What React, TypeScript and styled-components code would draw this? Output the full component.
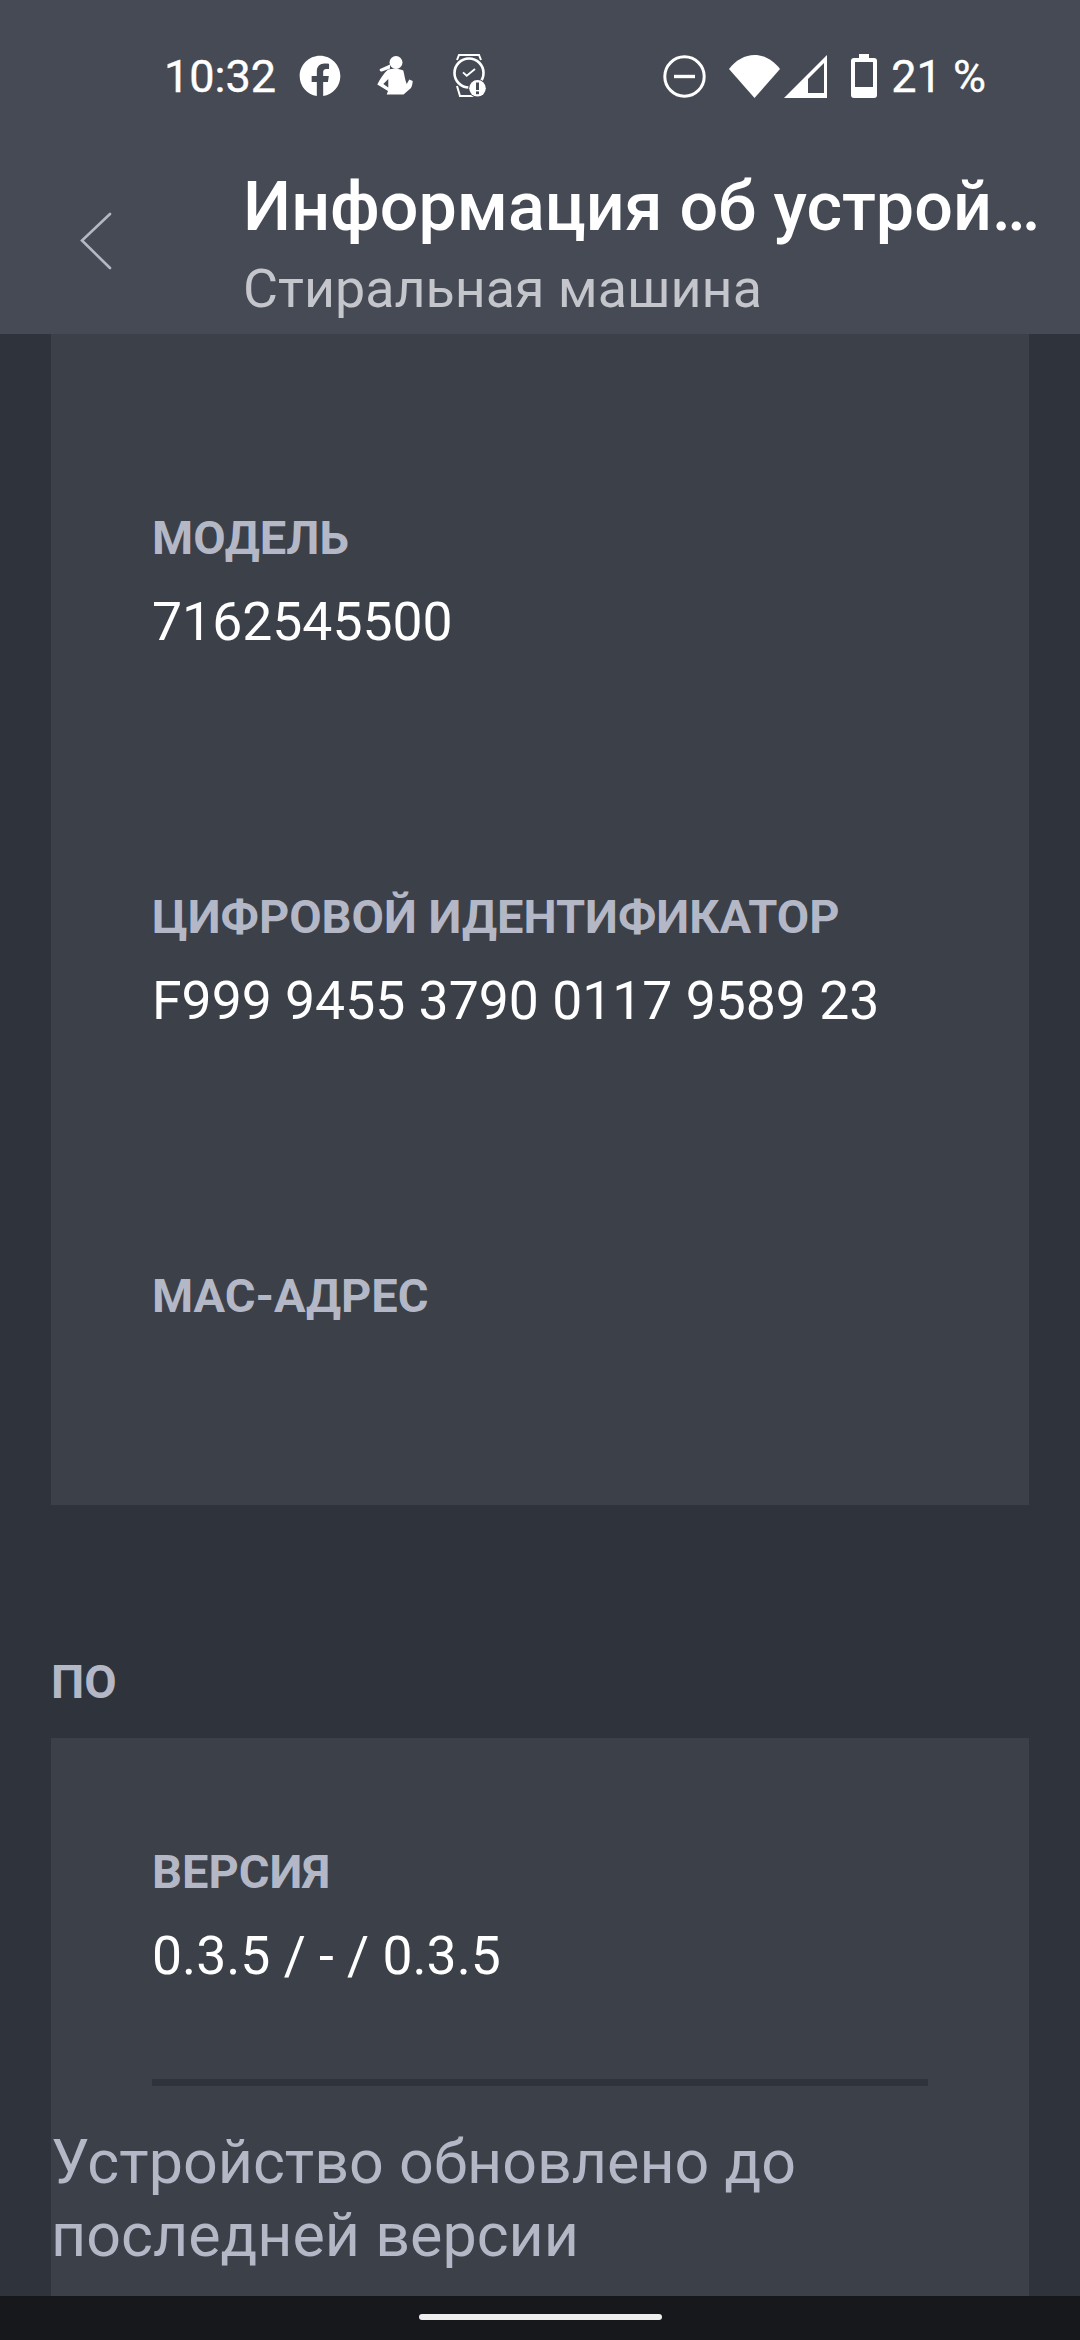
import styled, { createGlobalStyle } from "styled-components";
import { FaFacebook } from "react-icons/fa";

const GlobalStyle = createGlobalStyle`
  html, body {
    margin: 0;
    padding: 0;
    background: #2f333b;
  }
  * {
    box-sizing: border-box;
  }
`;

type Field = {
  label: string;
  value?: string;
};

const deviceFields: Field[] = [
  { label: "МОДЕЛЬ", value: "7162545500" },
  { label: "ЦИФРОВОЙ ИДЕНТИФИКАТОР", value: "F999 9455 3790 0117 9589 23" },
  { label: "MAC-АДРЕС" },
];

const RunnerIcon = () => (
  <svg width="36" height="41" viewBox="0 0 36 41" fill="#fff">
    <circle cx="19" cy="6.5" r="6.5" />
    <path d="M13 8.5 L3 13 C2 14 3 16 5 15.5 L13 12.5 Z" />
    <path
      fillRule="evenodd"
      d="M11 13.5 C16 12.5 22 12.5 26.3 14.5 C27.5 19 28 24 29.7 28 L32.3 23.5 L35.7 25 C35.5 28 35 30 34 32 L26.5 38.5 H9.7 L11 35 L0.3 28.5 C3 23 7 17 11 13.5 Z M6.3 28 L11.3 31.5 L11.3 23 Z"
    />
  </svg>
);

const WatchIcon = () => (
  <svg width="36" height="44" viewBox="0 0 36 44" fill="none" stroke="#fff">
    <path d="M5 6 L7 1 H27 L29 6" strokeWidth="2" />
    <path d="M5 32 L8 42 H22" strokeWidth="2" />
    <circle cx="17" cy="19" r="14.5" strokeWidth="2.6" />
    <path d="M11 18.3 L14.7 21.7 L23 15" strokeWidth="1.8" />
    <circle cx="25.5" cy="34.3" r="8.3" fill="#fff" stroke="#464a55" strokeWidth="2" paintOrder="stroke" />
    <rect x="24" y="28.5" width="3" height="7.5" fill="#464a55" stroke="none" />
    <rect x="24" y="37.4" width="3" height="2.8" fill="#464a55" stroke="none" />
  </svg>
);

const DndIcon = () => (
  <svg width="43" height="43" viewBox="0 0 43 43" fill="none" stroke="#fff">
    <circle cx="21.5" cy="21.5" r="19.7" strokeWidth="3" />
    <path d="M11 21.5 H32" strokeWidth="3.4" />
  </svg>
);

const WifiIcon = () => (
  <svg width="51" height="43" viewBox="0 0 51 43" fill="#fff">
    <path d="M25.5 43 L0 14 C7 5 16 0 25.5 0 C35 0 44 5 51 14 Z" />
  </svg>
);

const SignalIcon = () => (
  <svg width="43" height="43" viewBox="0 0 43 43" fill="#fff">
    <path fillRule="evenodd" d="M43 0 V43 H0 Z M40 8 L24 24 V38 H40 Z" />
  </svg>
);

const BatteryIcon = () => (
  <svg width="26" height="44" viewBox="0 0 26 44" fill="#fff">
    <path
      fillRule="evenodd"
      d="M8 0 H18 V4 H23 C25 4 26 5 26 7 V41 C26 43 25 44 23 44 H3 C1 44 0 43 0 41 V7 C0 5 1 4 3 4 H8 Z M4 8 V33 H22 V8 Z"
    />
  </svg>
);

const BackIcon = () => (
  <svg width="32" height="58" viewBox="0 0 32 58" fill="none" stroke="#b4b8c6" strokeWidth="2.6" strokeLinecap="round">
    <path d="M30 2 L2 28.5 L30 56" />
  </svg>
);

export default function App() {
  return (
    <>
      <GlobalStyle />
      <Screen>
        <Header>
          <StatusBar>
            <StatusGroup>
              <Clock>10:32</Clock>
              <StatusIcon $left={23}>
                <FaFacebook size={42} color="#fff" />
              </StatusIcon>
              <StatusIcon $left={36}>
                <RunnerIcon />
              </StatusIcon>
              <StatusIcon $left={39}>
                <WatchIcon />
              </StatusIcon>
            </StatusGroup>
            <StatusGroup>
              <StatusIcon $left={0}>
                <DndIcon />
              </StatusIcon>
              <StatusIcon $left={23}>
                <WifiIcon />
              </StatusIcon>
              <StatusIcon $left={4}>
                <SignalIcon />
              </StatusIcon>
              <StatusIcon $left={24}>
                <BatteryIcon />
              </StatusIcon>
              <BatteryText>21 %</BatteryText>
            </StatusGroup>
          </StatusBar>
          <TitleBar>
            <BackButton>
              <BackIcon />
            </BackButton>
            <TitleBlock>
              <Title>Информация об устройстве</Title>
              <Subtitle>Стиральная машина</Subtitle>
            </TitleBlock>
          </TitleBar>
        </Header>

        <Content>
          <Card $first>
            {deviceFields.map((field) => (
              <FieldRow key={field.label}>
                <FieldLabel>{field.label}</FieldLabel>
                {field.value && <FieldValue>{field.value}</FieldValue>}
              </FieldRow>
            ))}
          </Card>
          <SectionTitle>ПО</SectionTitle>
          <Card>
            <VersionRow>
              <FieldLabel>ВЕРСИЯ</FieldLabel>
              <FieldValue>0.3.5 / - / 0.3.5</FieldValue>
            </VersionRow>
            <Divider />
            <UpdateMessage>Устройство обновлено до последней версии</UpdateMessage>
          </Card>
        </Content>

        <NavBar>
          <HomePill />
        </NavBar>
      </Screen>
    </>
  );
}

const Screen = styled.div`
  display: flex;
  flex-direction: column;
  width: 1080px;
  height: 2340px;
  overflow: hidden;
  background: #2f333b;
  font-family: Roboto, "Noto Sans", sans-serif;
`;

const Header = styled.header`
  position: relative;
  z-index: 1;
  flex: none;
  height: 334px;
  background: #464a55;
`;

const StatusBar = styled.div`
  display: flex;
  justify-content: space-between;
  align-items: center;
  height: 152px;
  padding: 0 94px 0 164px;
`;

const StatusGroup = styled.div`
  display: flex;
  align-items: center;
`;

const StatusIcon = styled.span<{ $left: number }>`
  display: flex;
  margin-left: ${(p) => p.$left}px;
`;

const Clock = styled.span`
  color: #fff;
  font-size: 45px;
  line-height: 1;
  -webkit-text-stroke: 0.4px #fff;
`;

const BatteryText = styled.span`
  margin-left: 14px;
  color: #fff;
  font-size: 45px;
  line-height: 1;
  -webkit-text-stroke: 0.4px #fff;
`;

const TitleBar = styled.div`
  display: flex;
  align-items: flex-start;
`;

const BackButton = styled.div`
  display: flex;
  flex: none;
  width: 243px;
  padding: 60px 0 0 80px;
`;

const TitleBlock = styled.div`
  flex: none;
  width: 805px;
`;

const Title = styled.div`
  overflow: hidden;
  color: #fff;
  font-size: 68.2px;
  font-weight: 500;
  line-height: 78px;
  white-space: nowrap;
  text-overflow: ellipsis;
  margin-top: 16px;
`;

const Subtitle = styled.div`
  color: #c4c6cc;
  font-size: 53.8px;
  line-height: 62px;
  margin-top: 12px;
`;

const Content = styled.main`
  flex: 1;
  min-height: 0;
  overflow: hidden;
  padding: 0 51px;
`;

const Card = styled.section<{ $first?: boolean }>`
  background: #3c4049;
  padding: ${(p) => (p.$first ? "176px 0 0" : "0 0 60px")};
`;

const FieldRow = styled.div`
  height: 379px;
  padding-left: 101px;

  &:last-child {
    height: 237px;
  }
`;

const VersionRow = styled.div`
  padding: 106px 0 0 101px;
`;

const FieldLabel = styled.div`
  color: #b4b8c6;
  font-size: 47px;
  font-weight: 700;
  line-height: 56px;
`;

const FieldValue = styled.div`
  margin-top: 28px;
  color: #fff;
  font-size: 53.5px;
  line-height: 56px;
`;

const SectionTitle = styled.h2`
  margin: 0;
  padding: 0;
  height: 233px;
  padding-top: 149px;
  color: #b4b8c6;
  font-size: 47px;
  font-weight: 700;
  line-height: 56px;
`;

const Divider = styled.div`
  height: 7px;
  margin: 95px 101px 0;
  background: #2f333b;
`;

const UpdateMessage = styled.p`
  margin: 40px 0 0;
  color: #b4b8c6;
  font-size: 61px;
  line-height: 73px;
`;

const NavBar = styled.footer`
  display: flex;
  flex: none;
  justify-content: center;
  height: 44px;
  padding-top: 18px;
  background: #16181c;
`;

const HomePill = styled.div`
  width: 243px;
  height: 6px;
  border-radius: 3px;
  background: #eee;
`;
